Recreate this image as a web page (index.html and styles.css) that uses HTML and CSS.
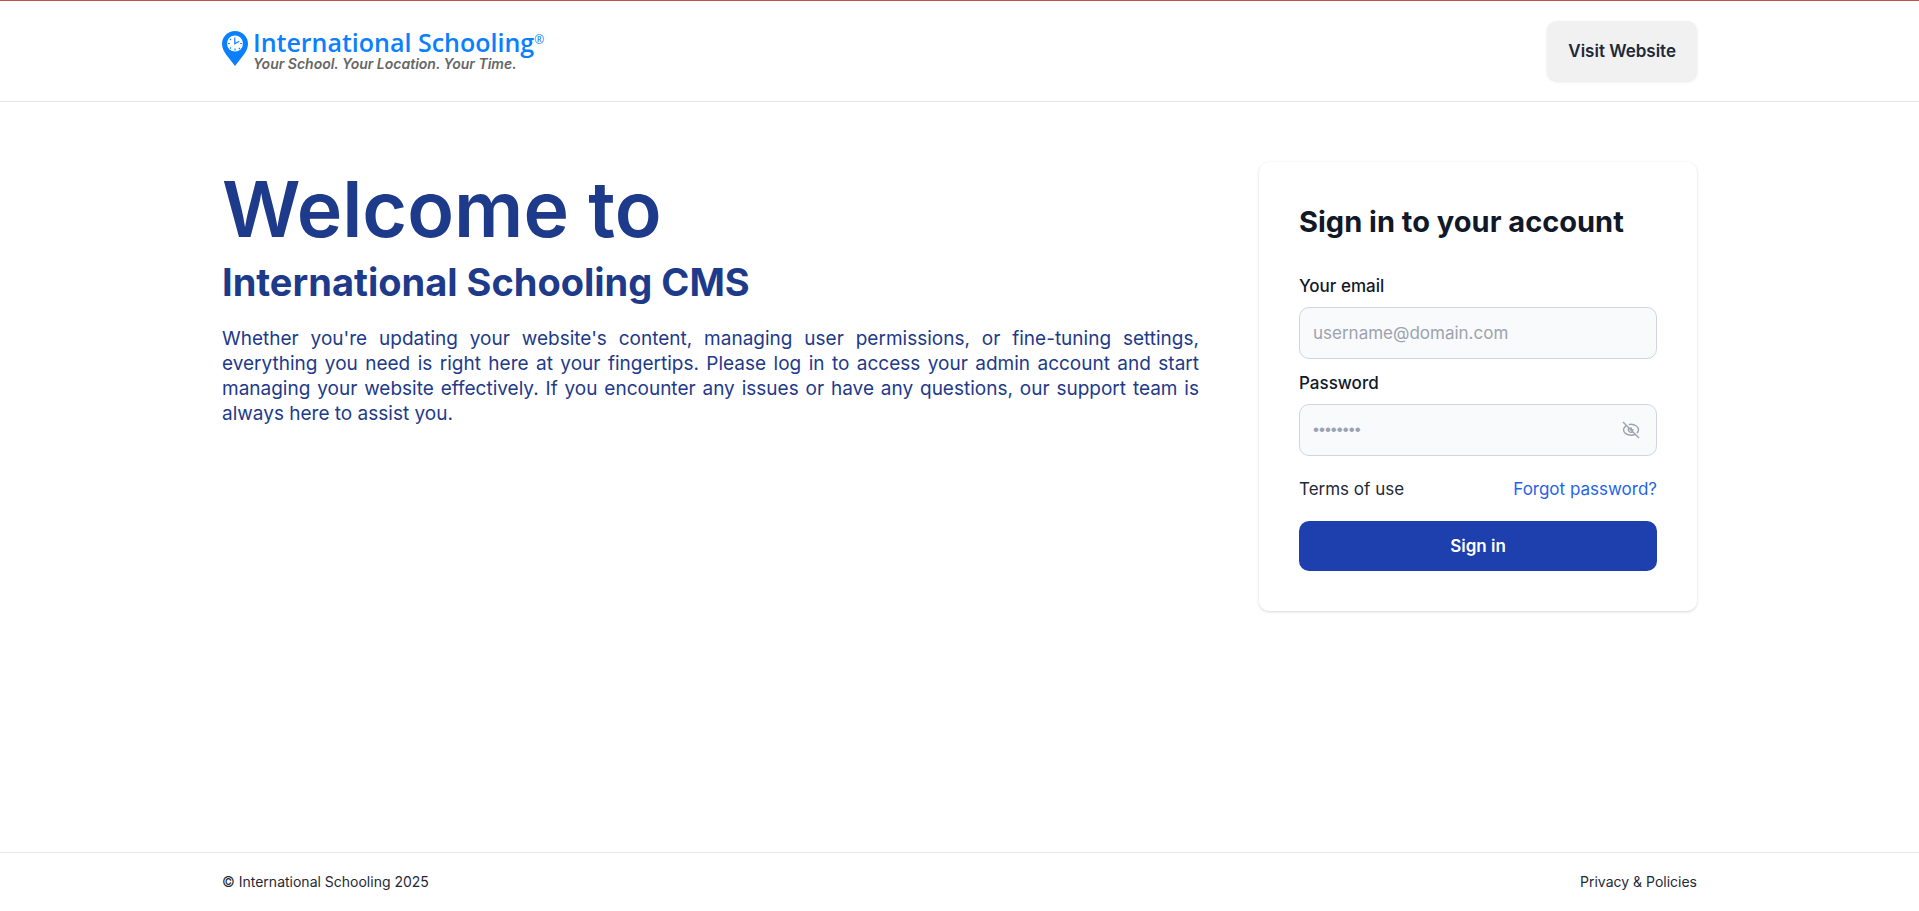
FILE: index.html
```html
<!DOCTYPE html>
<html lang="en">
<head>
<meta charset="utf-8">
<meta name="viewport" content="width=device-width, initial-scale=1">
<title>International Schooling CMS</title>
<link rel="stylesheet" href="styles.css">
</head>
<body>
<header class="site-header">
  <div class="container header-row">
    <a class="logo" href="#">
      <svg class="logo-pin" viewBox="0 0 26 35" aria-hidden="true">
        <path d="M13 0C5.800 0 0 5.700 0 12.800c0 4 1.700 7.200 3.900 10.400L13 35l9.100-11.800C24.300 20 26 16.800 26 12.800 26 5.700 20.200 0 13 0z" fill="#0a80ff"/>
        <circle cx="13" cy="12.500" r="8" fill="#fff"/>
        <path d="M12.800 6.500v6.300l4.500-2.600M13 17.500v2M5.800 12.500h2M18.200 12.500h2M8 8l1 1M17 17l1 1M8 17.500l1-1" fill="none" stroke="#0a80ff" stroke-width="1.200"/>
      </svg>
      <span class="logo-text">
        <span class="logo-name">International Schooling<sup class="logo-mark">®</sup></span>
        <span class="logo-tagline">Your School. Your Location. Your Time.</span>
      </span>
    </a>
    <a class="visit" href="#">Visit Website</a>
  </div>
</header>
<main class="container main">
  <section class="intro">
    <h1 class="welcome">Welcome to</h1>
    <h2 class="product">International Schooling CMS</h2>
    <p class="lead">Whether you're updating your website's content, managing user permissions, or fine-tuning settings, everything you need is right here at your fingertips. Please log in to access your admin account and start managing your website effectively. If you encounter any issues or have any questions, our support team is always here to assist you.</p>
  </section>
  <form class="card">
    <h2 class="card-title">Sign in to your account</h2>
    <label class="label" for="email">Your email</label>
    <input class="input" id="email" type="email" placeholder="username@domain.com">
    <label class="label" for="password">Password</label>
    <div class="password">
      <input class="input password-input" id="password" type="password" placeholder="••••••••">
      <button class="toggle" type="button" aria-label="Show password">
        <svg class="eye" viewBox="0 0 18 18" fill="none" stroke="#9ca3af" stroke-width="1.400" aria-hidden="true">
          <path d="M1 1l16 16M4.200 4.600C2.500 5.700 1.500 7.300 1.500 8.800c0 2.900 3.500 5.400 7.500 5.400 1.600 0 3-.3 4.200-.9M6.800 3.600c.7-.2 1.400-.3 2.200-.3 4 0 7.500 2.600 7.500 5.500 0 1.200-.6 2.400-1.600 3.400M6.700 7c-.8 1.600-.2 3.500 1.500 4.100 1 .4 2.100.2 2.800-.4M9 6.200c-.2 1.500.6 2.600 2.600 2.800"/>
        </svg>
      </button>
    </div>
    <div class="links">
      <a class="terms" href="#">Terms of use</a>
      <a class="forgot" href="#">Forgot password?</a>
    </div>
    <button class="submit" type="submit">Sign in</button>
  </form>
</main>
<footer class="site-footer">
  <div class="container footer-row">
    <span>© International Schooling 2025</span>
    <a class="footer-link" href="#">Privacy &amp; Policies</a>
  </div>
</footer>
</body>
</html>
```

FILE: styles.css
```css
*, *::before, *::after { box-sizing: border-box; }

body {
  display: flex;
  flex-direction: column;
  min-height: 100vh;
  margin: 0;
  border-top: 1px solid #c0504f;
  background: #fff;
  color: #111827;
  font-family: Inter, "Liberation Sans", sans-serif;
  font-size: 17px;
  line-height: 24px;
}

a { color: inherit; text-decoration: none; }
h1, h2, p { margin: 0; }

.container {
  width: 100%;
  max-width: 1523px;
  margin: 0 auto;
  padding: 0 24px;
}

.site-header { border-bottom: 1px solid #e5e7eb; }

.header-row {
  display: flex;
  align-items: center;
  justify-content: space-between;
  padding-top: 20px;
  padding-bottom: 20px;
}

.logo { display: flex; align-items: flex-start; gap: 5px; }
.logo-pin { width: 26px; height: 35px; margin-top: 2px; }
.logo-text { display: flex; flex-direction: column; white-space: nowrap; }

.logo-name {
  color: #0a80ff;
  font-family: "Open Sans", "Noto Sans", sans-serif;
  font-size: 25px;
  font-weight: 600;
  line-height: 26px;
}

.logo-mark { font-size: 12px; font-weight: 400; line-height: 12px; vertical-align: 8px; }

.logo-tagline {
  color: #666;
  font-size: 14px;
  font-style: italic;
  font-weight: 600;
  line-height: 18px;
}

.visit {
  padding: 18px 21px;
  border-radius: 10px;
  background: #f1f1f1;
  box-shadow: 0 1px 3px rgb(0 0 0 / 10%);
  color: #1f2937;
  font-weight: 600;
}

.main {
  display: flex;
  flex: 1;
  align-items: flex-start;
  gap: 60px;
  padding-top: 60px;
  padding-bottom: 60px;
}

.intro { flex: 1; color: #1e3a8a; }
.welcome { font-size: 77px; font-weight: 600; line-height: 95px; }
.product { font-size: 38px; font-weight: 700; line-height: 50px; }
.lead { margin-top: 19px; font-size: 19px; line-height: 25px; text-align: justify; }

.card {
  display: flex;
  flex: 0 0 438px;
  flex-direction: column;
  padding: 40px;
  border-radius: 10px;
  background: #fff;
  box-shadow: 0 1px 3px rgb(0 0 0 / 16%);
}

.card-title { margin-bottom: 32px; font-size: 29px; font-weight: 700; line-height: 40px; }
.label { margin-bottom: 9px; font-weight: 500; }

.input {
  width: 100%;
  height: 52px;
  margin-bottom: 12px;
  padding: 0 13px;
  border: 1px solid #d1d5db;
  border-radius: 10px;
  background: #f9fafb;
  color: #111827;
  font: inherit;
}

.input::placeholder { color: #9ca3af; opacity: 1; }

.password { position: relative; }
.password-input { font-family: "Liberation Sans", sans-serif; }

.toggle {
  position: absolute;
  top: 16px;
  right: 16px;
  display: flex;
  padding: 1px;
  border: 0;
  background: none;
}

.eye { width: 18px; height: 18px; }

.links {
  display: flex;
  justify-content: space-between;
  margin: 9px 0 20px;
}

.terms { color: #1f2937; }
.forgot { color: #2563eb; }

.submit {
  height: 50px;
  border: 0;
  border-radius: 10px;
  background: #1e40af;
  color: #fff;
  font: inherit;
  font-weight: 600;
}

.site-footer { border-top: 1px solid #e5e7eb; }

.footer-row {
  display: flex;
  justify-content: space-between;
  padding-top: 17px;
  padding-bottom: 17px;
  color: #1f2937;
  font-size: 14px;
}
```
